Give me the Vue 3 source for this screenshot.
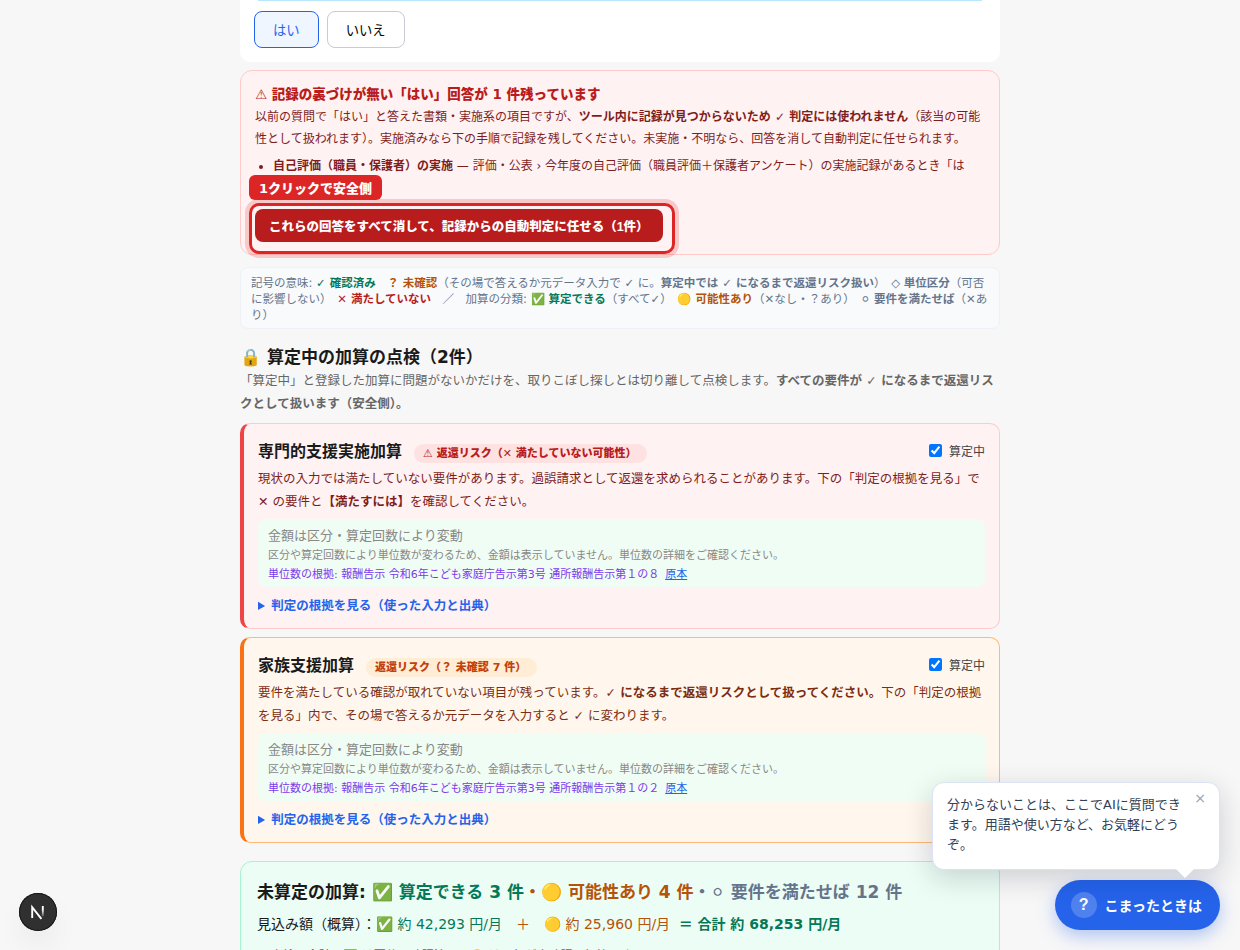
<script setup>
import { ref } from 'vue'

const answer = ref('yes')
const showHelp = ref(true)

const cards = ref([
  { id: 1, level: 'danger', name: '専門的支援実施加算', no: '８', active: true },
  { id: 2, level: 'warn', name: '家族支援加算', no: '２', active: true }
])
</script>

<template>
  <div class="page">
    <main class="content">
      <section class="question">
        <div class="note"></div>
        <div class="answers">
          <button class="answer" :class="{ selected: answer === 'yes' }" @click="answer = 'yes'">はい</button>
          <button class="answer" :class="{ selected: answer === 'no' }" @click="answer = 'no'">いいえ</button>
        </div>
      </section>

      <section class="alert">
        <div class="alert-title">⚠ 記録の裏づけが無い「はい」回答が 1 件残っています</div>
        <div class="alert-text">
          以前の質問で「はい」と答えた書類・実施系の項目ですが、<strong>ツール内に記録が見つからないため ✓ 判定には使われません</strong>（該当の可能性として扱われます）。実施済みなら下の手順で記録を残してください。未実施・不明なら、回答を消して自動判定に任せられます。
        </div>
        <ul class="alert-list">
          <li><strong>自己評価（職員・保護者）の実施</strong> — 評価・公表 › 今年度の自己評価（職員評価＋保護者アンケート）の実施記録があるとき「は</li>
        </ul>
        <div class="clear-area">
          <button class="clear-btn">これらの回答をすべて消して、記録からの自動判定に任せる（1件）</button>
          <div class="marker"></div>
          <span class="marker-label">1クリックで安全側</span>
        </div>
      </section>

      <section class="legend">
        記号の意味: <b class="green">✓ 確認済み</b>　<b class="amber">？ 未確認</b>（その場で答えるか元データ入力で ✓ に。<b>算定中では ✓ になるまで返還リスク扱い</b>）　◇ <b>単位区分</b>（可否に影響しない）　<b class="red">✕ 満たしていない</b>　／　加算の分類: <b class="green">✅ 算定できる</b>（すべて✓）　<b class="amber">🟡 可能性あり</b>（✕なし・？あり）　<b>&#x26AA;&#xFE0E; 要件を満たせば</b>（✕あり）
      </section>

      <h2 class="heading">🔒 算定中の加算の点検（2件）</h2>
      <p class="lead">
        「算定中」と登録した加算に問題がないかだけを、取りこぼし探しとは切り離して点検します。<b>すべての要件が ✓ になるまで返還リスクとして扱います（安全側）。</b>
      </p>

      <article v-for="card in cards" :key="card.id" class="card" :class="card.level">
        <div class="card-head">
          <div class="card-name">
            <span class="name">{{ card.name }}</span>
            <span v-if="card.level === 'danger'" class="badge">⚠ 返還リスク（✕ 満たしていない可能性）</span>
            <span v-else class="badge">返還リスク（？ 未確認 7 件）</span>
          </div>
          <label class="check"><input v-model="card.active" type="checkbox" />算定中</label>
        </div>
        <div v-if="card.level === 'danger'" class="card-text">
          現状の入力では満たしていない要件があります。過誤請求として返還を求められることがあります。下の「判定の根拠を見る」で ✕ の要件と<b>【満たすには】</b>を確認してください。
        </div>
        <div v-else class="card-text">
          要件を満たしている確認が取れていない項目が残っています。<b>✓ になるまで返還リスクとして扱ってください。</b>下の「判定の根拠を見る」内で、その場で答えるか元データを入力すると ✓ に変わります。
        </div>
        <div class="amount">
          <div class="amount-title">金額は区分・算定回数により変動</div>
          <div class="amount-note">区分や算定回数により単位数が変わるため、金額は表示していません。単位数の詳細をご確認ください。</div>
          <div class="amount-source">単位数の根拠: 報酬告示 令和6年こども家庭庁告示第3号 通所報酬告示第１の{{ card.no }} <a href="#">原本</a></div>
        </div>
        <details class="basis">
          <summary>判定の根拠を見る（使った入力と出典）</summary>
        </details>
      </article>

      <section class="summary">
        <div class="summary-title">
          未算定の加算: <span class="green">✅ 算定できる 3 件</span><span class="amber">・🟡 可能性あり 4 件</span><span class="gray">・&#x26AA;&#xFE0E; 要件を満たせば 12 件</span>
        </div>
        <div class="summary-total">
          見込み額（概算）：<span class="green">✅ 約 42,293 円/月</span><span class="amber">　＋　🟡 約 25,960 円/月</span><b class="green total">＝ 合計 約 68,253 円/月</b>
        </div>
        <div class="summary-note">※ 点検の合計：✅ は要件の確認済み・🟡 は一部が未確認の加算です。</div>
      </section>
    </main>

    <div class="dev-badge">
      <svg width="38" height="38" viewBox="0 0 38 38" fill="none">
        <defs>
          <linearGradient id="fade" x1="0" y1="13" x2="0" y2="25" gradientUnits="userSpaceOnUse">
            <stop offset="0.3" stop-color="#fff" />
            <stop offset="1" stop-color="#fff" stop-opacity="0" />
          </linearGradient>
        </defs>
        <path d="M13.2 25V14.2L22.4 25.8" stroke="#fff" stroke-width="1.9" />
        <path d="M23.8 13v10.5" stroke="url(#fade)" stroke-width="1.9" />
      </svg>
    </div>

    <div class="help">
      <div v-if="showHelp" class="bubble">
        分からないことは、ここでAIに質問できます。用語や使い方など、お気軽にどうぞ。
        <button class="close" @click="showHelp = false">×</button>
      </div>
      <button class="help-btn"><span class="help-icon">?</span>こまったときは</button>
    </div>
  </div>
</template>

<style>
body {
  background: #f7f7f7;
}
</style>

<style scoped>
.page {
  height: 950px;
  overflow: hidden;
  position: relative;
  background: #f7f7f7;
  color: #1a1a1a;
  font-family: "DejaVu Sans", "Noto Sans CJK JP", sans-serif;
}

button {
  font-family: "Liberation Sans", "Noto Sans CJK JP", sans-serif;
  cursor: pointer;
}

.content {
  width: 760px;
  margin: 0 auto;
}

.green {
  color: #047857;
}

.amber {
  color: #b45309;
}

.red {
  color: #b91c1c;
}

.gray {
  color: #64748b;
}

.question {
  height: 62px;
  box-sizing: border-box;
  padding: 0 14px;
  background: #fff;
  border-radius: 0 0 10px 10px;
}

.note {
  height: 1px;
  margin: 0 4px 10px;
  background: #bae6fd;
}

.answers {
  display: flex;
  gap: 8px;
}

.answer {
  height: 37px;
  padding: 0 18px;
  border: 1px solid #c9c9d8;
  border-radius: 8px;
  background: #fff;
  color: #000;
  font-size: 13.333px;
}

.answer.selected {
  border-color: #2563eb;
  background: #eff6ff;
  color: #2563eb;
}

.alert {
  height: 185px;
  box-sizing: border-box;
  margin-top: 8px;
  padding: 12px 14px;
  border: 1px solid #fecaca;
  border-radius: 12px;
  background: #fef2f2;
  color: #7f1d1d;
  font-size: 12px;
  line-height: 22px;
}

.alert-title {
  margin-bottom: 1px;
  color: #b91c1c;
  font-size: 13.5px;
  font-weight: 800;
}

.alert-list {
  margin: 5px 0 0;
  padding-left: 18px;
}

.clear-area {
  position: relative;
  display: flex;
  margin-top: 32px;
}

.clear-btn {
  height: 33px;
  padding: 0 14px;
  border: 0;
  border-radius: 8px;
  background: #b91c1c;
  color: #fff;
  font-size: 12.5px;
  font-weight: 800;
}

.marker {
  position: absolute;
  left: -6px;
  top: -6px;
  width: 420px;
  height: 45px;
  border: 3px solid #dc2626;
  border-radius: 10px;
  box-shadow: 0 0 0 4px rgba(220, 38, 38, 0.2);
}

.marker-label {
  position: absolute;
  left: -6px;
  top: -34px;
  padding: 2px 10px 0;
  border-radius: 6px;
  background: #dc2626;
  color: #fff;
  font-size: 13px;
  font-weight: 800;
  line-height: 23px;
}

.legend {
  margin-top: 12px;
  padding: 7px 10px 5px;
  border: 1px solid #eef2f7;
  border-radius: 8px;
  background: #f8fafc;
  color: #64748b;
  font-size: 11.5px;
  line-height: 16px;
}

.heading {
  margin: 16px 0 0;
  font-size: 17px;
  line-height: 24px;
}

.lead {
  margin: 0 0 8px;
  color: #666;
  font-size: 12.5px;
  line-height: 23px;
}

.card {
  height: 206px;
  box-sizing: border-box;
  margin-bottom: 8px;
  padding: 14px 14px 14px;
  border: 1px solid #fecaca;
  border-left: 4px solid #ef4444;
  border-radius: 10px;
  background: #fef2f2;
}

.card.warn {
  border-color: #fdba74;
  border-left-color: #f97316;
  background: #fff7ed;
}

.card-head {
  display: flex;
  align-items: center;
  justify-content: space-between;
  height: 24px;
}

.name {
  font-size: 16px;
  font-weight: 700;
}

.badge {
  display: inline-block;
  margin-left: 12px;
  padding: 0 11px 0 9px;
  border-radius: 999px;
  background: #fee2e2;
  color: #b91c1c;
  font-size: 11px;
  font-weight: 800;
  line-height: 19px;
}

.warn .badge {
  background: #ffedd5;
  color: #c2410c;
}

.check {
  display: flex;
  align-items: center;
  gap: 7px;
  color: #444;
  font-size: 12px;
}

.check input {
  width: 13px;
  height: 13px;
  margin: 0;
}

.card-text {
  margin-top: 5px;
  color: #7f1d1d;
  font-size: 12.5px;
  line-height: 23px;
}

.warn .card-text {
  color: #7c2d12;
}

.amount {
  margin-top: 6px;
  padding: 7px 10px 3px;
  border-radius: 8px;
  background: #f0fdf4;
  color: #888;
  font-size: 11px;
  line-height: 19px;
}

.amount-title {
  margin-bottom: 1px;
  font-size: 13px;
}

.amount-source {
  color: #7c3aed;
}

.amount-source a {
  margin-left: 2.5px;
  color: #2563eb;
}

.basis {
  margin-top: 8px;
  color: #2563eb;
  font-size: 12.5px;
  font-weight: 700;
  line-height: 22px;
}

.summary {
  height: 160px;
  margin-top: 18px;
  padding: 16px 16px;
  border: 1px solid #a7f3d0;
  border-radius: 12px;
  background: #ecfdf5;
}

.summary-title {
  font-size: 17px;
  font-weight: 700;
  line-height: 29px;
}

.summary-total {
  margin-top: 4px;
  font-size: 14px;
  line-height: 26px;
}

.total {
  margin-left: 8.5px;
}

.summary-note {
  margin-top: 8px;
  color: #666;
  font-size: 12px;
  line-height: 22px;
}

.dev-badge {
  position: absolute;
  left: 19px;
  bottom: 19px;
  width: 38px;
  height: 38px;
  border-radius: 50%;
  background: #303030;
  box-shadow: inset 0 0 0 1px #171717, 0 16px 32px -8px rgba(0, 0, 0, 0.14);
}

.help {
  position: absolute;
  right: 20px;
  bottom: 20px;
  display: flex;
  flex-direction: column;
  align-items: flex-end;
  gap: 10px;
}

.bubble {
  position: relative;
  width: 288px;
  height: 88px;
  box-sizing: border-box;
  padding: 12px 36px 10px 14px;
  border: 1px solid #dbe3f4;
  border-radius: 12px;
  background: #fff;
  box-shadow: 0 8px 28px rgba(15, 23, 42, 0.18);
  color: #334155;
  font-size: 13px;
  line-height: 20.15px;
}

.bubble::after {
  content: "";
  position: absolute;
  right: 25px;
  bottom: -9px;
  border: 9px solid transparent;
  border-top-color: #fff;
  border-bottom: 0;
}

.close {
  position: absolute;
  top: 6px;
  right: 13px;
  padding: 0;
  border: 0;
  background: none;
  color: #94a3b8;
  font-family: inherit;
  font-size: 14px;
  line-height: 18px;
}

.help-btn {
  display: flex;
  align-items: center;
  gap: 8px;
  height: 50px;
  padding: 0 18px 0 16px;
  border: 0;
  border-radius: 25px;
  background: #2563eb;
  box-shadow: 0 6px 18px rgba(37, 99, 235, 0.35);
  color: #fff;
  font-family: inherit;
  font-size: 14px;
  font-weight: 700;
}

.help-icon {
  width: 26px;
  height: 26px;
  border-radius: 50%;
  background: rgba(255, 255, 255, 0.2);
  font-family: "Liberation Sans", sans-serif;
  font-size: 16px;
  line-height: 26px;
  text-align: center;
}
</style>
